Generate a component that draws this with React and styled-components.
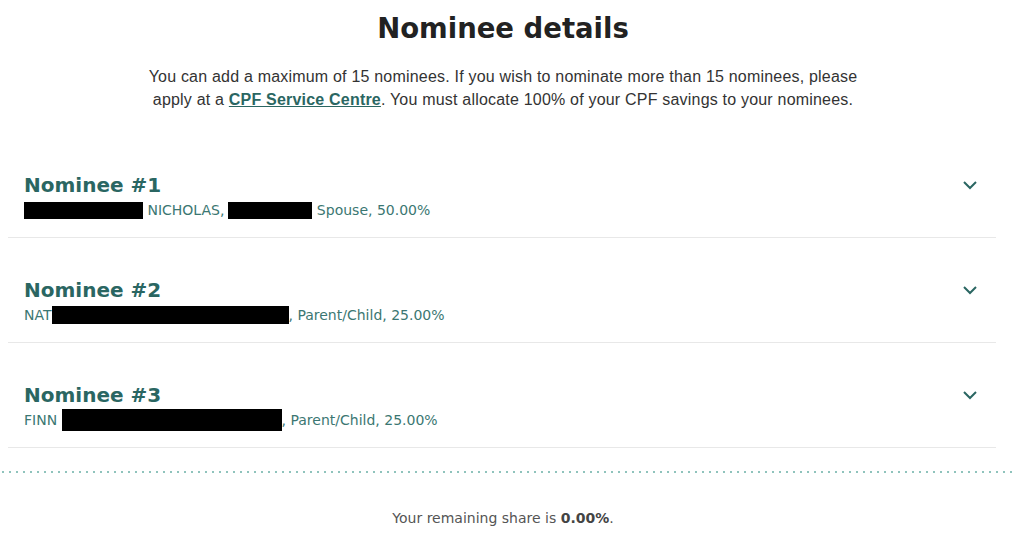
import React from "react";
import styled, { createGlobalStyle } from "styled-components";

const TEAL = "#2a6662";
const TEAL_LIGHT = "#3b7772";

const GlobalStyle = createGlobalStyle`
  body {
    margin: 0;
    background: #ffffff;
    font-family: "DejaVu Sans", "Liberation Sans", sans-serif;
  }
`;

const nominees = [
  {
    id: 1,
    parts: [
      { box: 119, h: 17 },
      { text: " NICHOLAS," },
      { box: 84, h: 17, gap: 4 },
      { text: " Spouse, 50.00%" },
    ],
  },
  {
    id: 2,
    parts: [
      { text: "NAT" },
      { box: 237, h: 18 },
      { text: ", Parent/Child, 25.00%" },
    ],
  },
  {
    id: 3,
    parts: [
      { text: "FINN " },
      { box: 220, h: 22 },
      { text: ", Parent/Child, 25.00%" },
    ],
  },
];

const App = () => {
  return (
    <>
      <GlobalStyle />
      <Page>
        <Title>Nominee details</Title>
        <Intro>
          You can add a maximum of 15 nominees. If you wish to nominate more than 15 nominees, please
          <br />
          apply at a <Link href="#">CPF Service Centre</Link>. You must allocate 100% of your CPF savings to your nominees.
        </Intro>
        <List>
          {nominees.map((n) => (
            <Row key={n.id}>
              <Info>
                <Heading>Nominee #{n.id}</Heading>
                <Detail>
                  {n.parts.map((p, i) =>
                    p.box ? (
                      <Redacted key={i} $w={p.box} $h={p.h} $gap={p.gap || 0} />
                    ) : (
                      <span key={i}>{p.text}</span>
                    )
                  )}
                </Detail>
              </Info>
              <Chevron width="16" height="10" viewBox="0 0 16 10">
                <path d="M2 2 L8 8 L14 2" fill="none" stroke={TEAL} strokeWidth="2" />
              </Chevron>
            </Row>
          ))}
        </List>
        <Dotted />
        <Remaining>
          Your remaining share is <b>0.00%</b>.
        </Remaining>
      </Page>
    </>
  );
};
export default App;

const Page = styled.div`
  display: flex;
  flex-direction: column;
  padding: 8px 0 0;
`;

const Title = styled.h1`
  margin: 0 18px 0 0;
  text-align: center;
  font-family: "DejaVu Sans", sans-serif;
  font-weight: bold;
  font-size: 27.5px;
  line-height: 40px;
  color: #222222;
`;

const Intro = styled.p`
  margin: 17px 18px 0 0;
  text-align: center;
  font-family: "Liberation Sans", Arial, sans-serif;
  font-size: 16px;
  letter-spacing: 0.2px;
  line-height: 23px;
  color: #333333;
`;

const Link = styled.a`
  color: ${TEAL};
  font-weight: bold;
  text-decoration: underline;
`;

const List = styled.div`
  margin: 22px 28px 0 8px;
  display: flex;
  flex-direction: column;
`;

const Row = styled.div`
  display: flex;
  align-items: flex-start;
  justify-content: space-between;
  padding: 38px 18px 17px 16px;
  border-bottom: 1px solid #e8e8e8;
`;

const Info = styled.div`
  display: flex;
  flex-direction: column;
  gap: 1px;
`;

const Heading = styled.div`
  font-family: "DejaVu Sans", sans-serif;
  font-weight: bold;
  font-size: 20px;
  line-height: 28px;
  color: ${TEAL};
`;

const Detail = styled.div`
  display: flex;
  align-items: center;
  height: 20px;
  font-size: 14px;
  line-height: 20px;
  color: ${TEAL_LIGHT};
  white-space: pre;
`;

const Redacted = styled.span`
  display: inline-block;
  flex-shrink: 0;
  width: ${(p) => p.$w}px;
  height: ${(p) => p.$h}px;
  margin-left: ${(p) => p.$gap}px;
  background: #000000;
`;

const Chevron = styled.svg`
  margin-top: 9px;
  flex-shrink: 0;
`;

const Dotted = styled.div`
  margin: 23px 10px 0 2px;
  height: 2px;
  background-image: linear-gradient(to right, #8fc3bc 0 2px, transparent 2px 7px);
  background-size: 7px 2px;
`;

const Remaining = styled.p`
  margin: 35px 18px 0 0;
  text-align: center;
  font-size: 14px;
  line-height: 20px;
  color: #555555;
  b {
    color: #444444;
  }
`;
